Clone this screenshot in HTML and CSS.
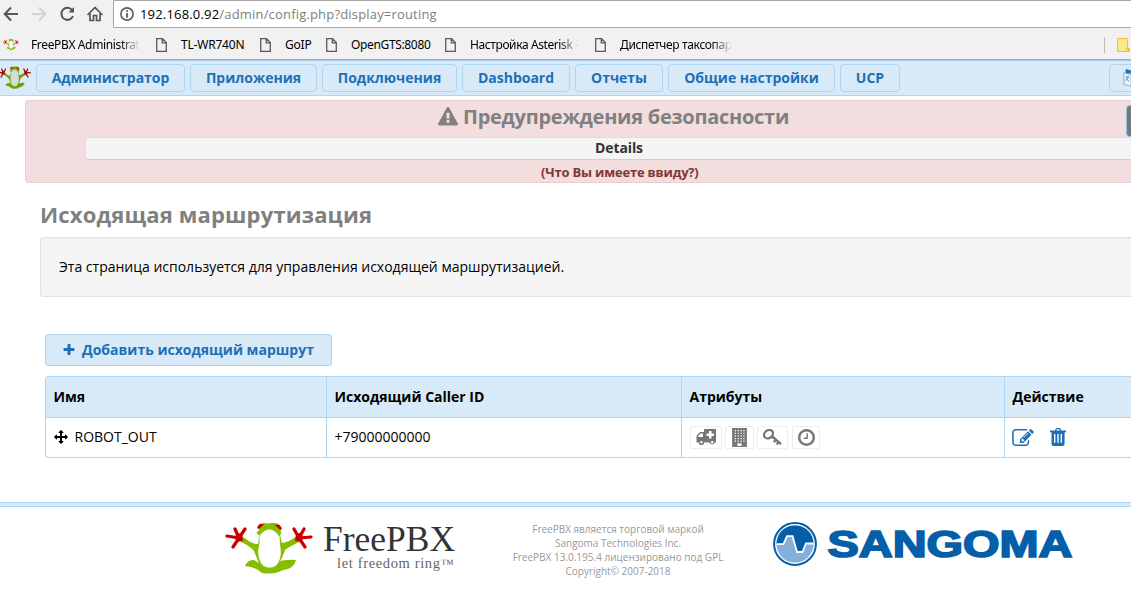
FILE: index.html
```
<!DOCTYPE html>
<html lang="ru">
<head>
<meta charset="utf-8">
<title>Исходящая маршрутизация</title>
<link rel="stylesheet" href="styles.css">
</head>
<body>
<svg class="defs" aria-hidden="true">
  <symbol id="page" viewBox="0 0 11 14"><path d="M.7.7h5.8l3.8 3.900v8.700H.7zM6.300.7v4.100h4" fill="none" stroke="#5a5a5a" stroke-width="1.300"/></symbol>
  <symbol id="frog" viewBox="0 0 88 52" preserveAspectRatio="none">
    <path d="M17 14Q28 23 33 22Q36 13 34 6Q35 1 40 1Q43 2 45 1Q49 1 50 1Q56 2 56 7Q54 13 57 21Q64 20 72 14L74 20Q62 26 60 28Q57 37 54 41H34Q31 34 29 29Q25 24 16 20Z" fill="#85bd00"/>
    <path d="M20 44Q23 37 29 38Q40 46 52 40Q61 37 71 38Q69 47 58 48Q49 53 37 51Q31 45 20 44Z" fill="#85bd00"/>
    <path d="M34 15Q36 9 44 5Q52 9 55 15Q55 22 56 27Q57 38 51 44Q45 48 38 44Q32 37 33 27Q35 20 34 15Z" fill="#fff" stroke="#85bd00" stroke-width=".6"/>
    <path d="M32.500 12Q39 6 44.500 5.500Q50 6 55.500 12" fill="none" stroke="#85bd00" stroke-width="3.400"/>
    <path d="M32 6Q34 0 39 2.500L34 7ZM57 7Q55 1 50 3L55 8Z" fill="#c00"/>
    <path d="M14 16L2 14M14 16L10 7M14 16L20 7M14 16L8 25M74 16L86 15M74 16L79 7M74 16L69 7M74 16L80 25" stroke="#c00" stroke-width="3.200" stroke-linecap="round"/>
    <path d="M10 14L13 11L17 12L18 19L11 20ZM78 14L75 11L71 12L70 19L77 20Z" fill="#c00"/>
  </symbol>
</svg>
<div class="chrome">
  <div class="toolbar">
    <svg class="controls" viewBox="0 0 113 28">
      <g fill="none" stroke="#555" stroke-width="2">
        <path d="M18 14H6M11 7.500L4.700 14L11 20.500"/>
        <path d="M32 14H44M39 7.500L45.300 14L39 20.500" stroke="#d3d3d3"/>
        <path d="M72 10A6 6 0 1 0 73 16"/>
        <path d="M74 7V12.500H68.500Z" fill="#555" stroke="none"/>
        <path d="M87.500 15L95 7.500L102.500 15M90 13.500V20.500H93.500V15.500H96.500V20.500H100V13.500" stroke-width="1.700"/>
      </g>
    </svg>
    <div class="address">
      <svg class="info" viewBox="0 0 14 14"><circle cx="7" cy="7" r="6.100" fill="none" stroke="#5a5a5a" stroke-width="1.600"/><path d="M6.100 3.300h1.800v1.700H6.100zM6.100 6h1.800v4.700H6.100z" fill="#5a5a5a"/></svg>
      <span class="url"><b>192.168.0.92</b>/admin/config.php?display=routing</span>
    </div>
  </div>
  <div class="bookmarks">
    <a class="bm bm1"><svg class="bmfrog"><use href="#frog"/></svg><span class="fade">FreePBX Administrat</span></a>
    <a class="bm bm2"><svg class="page"><use href="#page"/></svg><span>TL-WR740N</span></a>
    <a class="bm bm3"><svg class="page"><use href="#page"/></svg><span>GoIP</span></a>
    <a class="bm bm4"><svg class="page"><use href="#page"/></svg><span>OpenGTS:8080</span></a>
    <a class="bm bm5"><svg class="page"><use href="#page"/></svg><span class="fade">Настройка Asterisk -</span></a>
    <a class="bm bm6"><svg class="page"><use href="#page"/></svg><span class="fade">Диспетчер таксопар</span></a>
    <div class="other"><svg viewBox="0 0 14 16"><path d="M.5 1.500h10v10h2v3H.5z" fill="#ffe78f" stroke="#edc044"/><path d="M9.500 14v-3h2v3" fill="none" stroke="#edc044"/></svg></div>
  </div>
</div>
<nav class="nav">
  <svg class="navfrog"><use href="#frog"/></svg>
  <a class="n1"><span>Администратор</span></a><a class="n2"><span>Приложения</span></a><a class="n3"><span>Подключения</span></a><a class="n4"><span>Dashboard</span></a><a class="n5"><span>Отчеты</span></a><a class="n6"><span>Общие настройки</span></a><a class="n7"><span>UCP</span></a>
  <a class="lang"><svg viewBox="0 0 22 22"><path d="M4 1L22 6H4z" fill="#1d70b5"/><path d="M2 5L10 8V20L2 18ZM10 8H21V20H10" fill="#eef5fb" stroke="#8aa9c4"/><path d="M4 9L8 11M7 9L4 14M4 11L8 15" stroke="#4f86b5" fill="none"/></svg></a>
</nav>
<section class="alert">
  <h2><svg viewBox="0 0 1792 1792"><path d="M1024 1375v-190q0-14-9.500-23.500t-22.500-9.500h-192q-13 0-22.500 9.500t-9.500 23.500v190q0 14 9.500 23.500t22.500 9.500h192q13 0 22.500-9.500t9.500-23.500zm-2-374l18-459q0-12-10-19-13-11-24-11h-220q-11 0-24 11-10 7-10 21l17 457q0 10 10 16.500t24 6.500h185q14 0 23.500-6.500t10.500-16.500zm-14-934l768 1408q35 63-2 126-17 29-46.500 46t-63.500 17h-1536q-34 0-63.500-17t-46.500-46q-37-63-2-126l768-1408q17-31 47-49t65-18 65 18 47 49z"/></svg><span>Предупреждения безопасности</span></h2>
  <div class="details"><span>Details</span></div>
  <div class="what"><span>(Что Вы имеете ввиду?)</span></div>
  <div class="close"></div>
</section>
<main class="main">
  <h1><span>Исходящая маршрутизация</span></h1>
  <div class="well"><span>Эта страница используется для управления исходящей маршрутизацией.</span></div>
  <a class="add"><svg viewBox="0 0 1792 1792"><path d="M1600 736v192q0 40-28 68t-68 28h-416v416q0 40-28 68t-68 28h-192q-40 0-68-28t-28-68v-416h-416q-40 0-68-28t-28-68v-192q0-40 28-68t68-28h416v-416q0-40 28-68t68-28h192q40 0 68 28t28 68v416h416q40 0 68 28t28 68z"/></svg><span>Добавить исходящий маршрут</span></a>
  <div class="table">
    <div class="row head"><div><span>Имя</span></div><div><span>Исходящий Caller ID</span></div><div><span>Атрибуты</span></div><div><span>Действие</span></div></div>
    <div class="row item">
      <div><svg class="move" viewBox="0 0 1792 1792"><path d="M1792 896q0 26-19 45l-256 256q-19 19-45 19t-45-19-19-45v-128h-384v384h128q26 0 45 19t19 45-19 45l-256 256q-19 19-45 19t-45-19l-256-256q-19-19-19-45t19-45 45-19h128v-384h-384v128q0 26-19 45t-45 19-45-19l-256-256q-19-19-19-45t19-45l256-256q19-19 45-19t45 19 19 45v128h384v-384h-128q-26 0-45-19t-19-45 19-45l256-256q19-19 45-19t45 19l256 256q19 19 19 45t-19 45-45 19h-128v384h384v-128q0-26 19-45t45-19 45 19l256 256q19 19 19 45z"/></svg><span>ROBOT_OUT</span></div>
      <div><span>+79000000000</span></div>
      <div class="attrs">
        <i class="a1"><svg viewBox="0 0 20 17"><path fill-rule="evenodd" d="M8 0H20V13.500H18.700A2.600 2.600 0 0 1 13.600 13.500H8A2.600 2.600 0 0 1 2.800 13.500H.5V7L4 3H8ZM13 2V4.500H10.500V7H13V9.500H15.500V7H18V4.500H15.500V2ZM4.500 4.500L2 7.500V8H7V4.500ZM5.400 12A1.200 1.200 0 1 0 5.400 14.500A1.200 1.200 0 1 0 5.400 12ZM16.100 12A1.200 1.200 0 1 0 16.100 14.500A1.200 1.200 0 1 0 16.100 12Z"/></svg></i>
        <i class="a2"><svg viewBox="0 0 14 18"><path d="M0 0H14V18H0Z"/><path d="M2.500 2.500H12M2.500 5H12M2.500 7.500H12M2.500 10H12M2.500 12.500H12" stroke="#fff" stroke-width="1.100" stroke-dasharray="1.200 1.500"/><path d="M5 14.500H9V17H5Z" fill="#fff"/></svg></i>
        <i class="a3"><svg viewBox="0 0 19 17"><ellipse cx="5.500" cy="5.200" rx="4.800" ry="3.900" transform="rotate(-38 5.500 5.200)" fill="none" stroke="#777" stroke-width="2.300"/><path d="M7.600 8.600L9.800 6.300L18.800 14.200L17.300 16L15.800 14.700L14.600 16.200L12.800 14.600L14 13L13.200 12.300L11.600 14L9.800 12.300L11.300 10.700Z"/></svg></i>
        <i class="a4"><svg viewBox="128 128 1536 1536"><path d="M1024 544v448q0 14-9 23t-23 9h-320q-14 0-23-9t-9-23v-64q0-14 9-23t23-9h224v-352q0-14 9-23t23-9h64q14 0 23 9t9 23zm416 352q0-148-73-273t-198-198-273-73-273 73-198 198-73 273 73 273 198 198 273 73 273-73 198-198 73-273zm224 0q0 209-103 385.500t-279.500 279.500-385.500 103-385.500-103-279.500-279.500-103-385.500 103-385.500 279.500-279.500 385.500-103 385.500 103 279.500 279.500 103 385.500z"/></svg></i>
      </div>
      <div class="actions">
        <svg class="edit" viewBox="0 128 1792 1408"><path d="M888 1184l116-116-152-152-116 116v56h96v96h56zm440-720q-16-16-33 1l-350 350q-17 17-1 33t33-1l350-350q17-17 1-33zm80 594v190q0 119-84.500 203.500t-203.500 84.500h-832q-119 0-203.500-84.500t-84.500-203.500v-832q0-119 84.500-203.500t203.500-84.500h832q63 0 117 25 15 7 18 23 3 17-9 29l-49 49q-14 14-32 8-23-6-45-6h-832q-66 0-113 47t-47 113v832q0 66 47 113t113 47h832q66 0 113-47t47-113v-126q0-13 9-22l64-64q15-15 35-7t20 29zm-96-738l288 288-672 672h-288v-288zm444 132l-92 92-288-288 92-92q28-28 68-28t68 28l152 152q28 28 28 68t-28 68z"/></svg>
        <svg class="trash" viewBox="0 0 16 18"><path fill-rule="evenodd" d="M5 2.500L5.700.8Q6 0 7 0H9.500Q10.400 0 10.700.8L11.300 2.500H16V4.200H14.600V15.500Q14.600 18 12.500 18H3.500Q1.500 18 1.500 15.500V4.200H0V2.500ZM6.300 2.500H10L9.600 1.300H6.700ZM4 6V14.700H5.400V6ZM7.300 6V14.700H8.700V6ZM10.600 6V14.700H12V6Z"/></svg>
      </div>
    </div>
  </div>
</main>
<footer class="footer">
  <svg class="fpbx" viewBox="0 0 234 60" aria-label="FreePBX let freedom ring">
    <use href="#frog" x="0" y="2" width="88" height="52"/>
    <text x="98" y="31" font-size="36" fill="#333" textLength="132" lengthAdjust="spacingAndGlyphs">FreePBX</text>
    <text x="112" y="48" font-size="14.500" fill="#666" textLength="103" lengthAdjust="spacing">let freedom ring</text>
    <text x="216" y="48" font-size="13" fill="#666" textLength="13" lengthAdjust="spacingAndGlyphs">™</text>
  </svg>
  <div class="copy"><span class="c1">FreePBX является торговой маркой</span><span class="c2">Sangoma Technologies Inc.</span><span class="c3">FreePBX 13.0.195.4 лицензировано под GPL</span><span class="c4">Copyright© 2007-2018</span></div>
  <svg class="sangoma" viewBox="0 0 302 46" aria-label="Sangoma">
    <circle cx="22" cy="23" r="20.900" fill="#fff" stroke="#055ea8" stroke-width="2"/>
    <circle cx="22" cy="23" r="18.600" fill="#86aedb"/>
    <path d="M3.400 23A18.600 18.600 0 0 1 40.600 23H34L30 31H24L20 15H14L11 23Z" fill="#055ea8"/>
    <path d="M3.400 23.200H10.500L14 15.200H19.500L24 31H29.500L33 22.500H40.600" fill="none" stroke="#fff" stroke-width="1.800"/>
    <text x="54.500" y="36" font-size="37" textLength="245" lengthAdjust="spacingAndGlyphs">SANGOMA</text>
  </svg>
</footer>
</body>
</html>
```
FILE: styles.css
```
* { box-sizing: border-box; }
body { margin: 0; width: 1131px; height: 601px; overflow: hidden; background: #fff; color: #000; font: 14px/20px "Open Sans", "Noto Sans", sans-serif; }
svg { display: block; flex: none; }
.defs { position: absolute; width: 0; height: 0; }
span { white-space: nowrap; }
.chrome { height: 60px; background: #f1f1f1; border-bottom: 1px solid #a9a9a9; }
.toolbar { display: flex; height: 28px; }
.controls { width: 113px; height: 28px; }
.address { flex: 1; display: flex; align-items: center; padding-left: 6px; gap: 6px; background: #fff; border: 1px solid #a6a6a6; border-right: 0; border-radius: 2px 0 0 2px; }
.info { width: 14px; height: 14px; }
.url { font-size: 13px; color: #808080; letter-spacing: .18px; }
.url b { font-weight: 400; color: #000; }
.bookmarks { display: flex; height: 31px; padding: 2px 0 0 3px; font-family: "Noto Sans", sans-serif; font-size: 12px; letter-spacing: -.2px; }
.bm { display: flex; align-items: center; flex: none; }
.bm1 { width: 153px; gap: 12px; letter-spacing: -.36px; }
.bm2 { width: 104px; gap: 14px; }
.bm3 { width: 66px; gap: 14px; }
.bm4 { width: 119px; gap: 14px; letter-spacing: -.35px; }
.bm5 { width: 150px; gap: 14px; }
.bm6 { width: 160px; gap: 14px; }
.page { width: 11px; height: 14px; }
.bmfrog { width: 16px; height: 11px; }
.fade { min-width: 108px; -webkit-mask-image: linear-gradient(90deg, #000 82%, transparent); mask-image: linear-gradient(90deg, #000 82%, transparent); }
.bm5 { letter-spacing: -.4px; }
.bm6 { letter-spacing: -.35px; }
.other { margin: 7px 0 0 auto; height: 16px; width: 27px; padding-left: 12px; border-left: 1px solid #bbb; }
.other svg { width: 14px; height: 16px; }
.nav { position: relative; display: flex; align-items: flex-start; gap: 5px; height: 36px; padding-top: 3px; background: #d8eaf8; border-top: 1px solid #abcbe8; border-bottom: 1px solid #aed5f1; overflow: hidden; }
.navfrog { width: 33px; height: 23px; margin: 2px 0 0 -2px; filter: brightness(.85); }
.nav a { display: flex; align-items: center; justify-content: center; flex: none; height: 28px; border: 1px solid #aed5f1; border-radius: 4px; color: #1d70b5; font-weight: 700; }
.n1 { width: 149px; } .n2 { width: 127px; } .n3 { width: 135px; } .n4 { width: 108px; } .n5 { width: 88px; } .n6 { width: 167px; } .n7 { width: 60px; }
.nav .lang { width: 48px; margin-left: 204px; justify-content: flex-start; padding-left: 12px; }
.lang svg { width: 20px; height: 20px; }
.alert { position: relative; height: 83px; margin: 4px 0 0 25px; border: 1px solid #ebccd1; border-right: 0; border-radius: 4px 0 0 4px; background: #f2dede; }
.alert h2 { display: flex; align-items: center; gap: 5px; height: 36px; margin: 0; padding: 0 0 4px 412px; font-size: 20px; letter-spacing: -.27px; color: #808080; }
.alert h2 svg { width: 20px; height: 20px; fill: #808080; }
.details { height: 22px; margin-left: 60px; padding-left: 509px; background: #f5f5f5; border-top: 1px solid #ddd; border-radius: 3px 0 0 3px; box-shadow: 0 1px 1px #d5cdcd; color: #333; font-weight: 700; letter-spacing: -.1px; }
.what { padding: 3px 0 0 515px; color: #843534; font-size: 13px; font-weight: 700; letter-spacing: -.2px; }
.close { position: absolute; right: 0; top: 4px; width: 5px; height: 32px; background: #777; border: 1px solid #8fc6e8; border-right: 0; border-radius: 4px 0 0 4px; }
.main { padding: 16px 0 0 40px; }
.main h1 { height: 38px; margin: 0; font-size: 22px; line-height: 30px; letter-spacing: .17px; color: #808080; }
.well { height: 60px; padding: 19px 18px; background: #f5f5f5; border: 1px solid #e3e3e3; border-right: 0; border-radius: 4px 0 0 4px; box-shadow: inset 0 1px 1px #ececec; }
.add { display: flex; align-items: center; gap: 6px; width: 287px; height: 32px; margin: 37px 0 10px 5px; padding-left: 16px; background: #d8eaf8; border: 1px solid #aed5f1; border-radius: 3px; color: #1d70b5; fill: #1d70b5; font-weight: 700; }
.add svg { width: 14px; height: 14px; }
.table { margin-left: 5px; border: 1px solid #aed5f1; border-right: 0; border-radius: 4px 0 0 4px; height: 82px; overflow: hidden; }
.row { display: grid; grid-template-columns: 281px 355px 323px 1fr; height: 40px; }
.row.head { height: 41px; background: #d8eaf8; border-bottom: 1px solid #aed5f1; font-weight: 700; }
.row > div { display: flex; align-items: center; padding-left: 7.5px; }
.row.item > div { padding-bottom: 2px; }
.row > div:not(:last-child) { border-right: 1px solid #aed5f1; }
.move { width: 14px; height: 14px; margin-right: 7px; }
.row .attrs { fill: #777; gap: 3px; padding-left: 8px; }
.attrs i { display: flex; align-items: center; justify-content: center; height: 23px; border: 1px solid #eee; border-radius: 2px; }
.a1 { width: 32px; } .a2 { width: 29px; } .a3 { width: 31px; } .a4 { width: 28px; }
.attrs i.a4 { margin-left: 1px; }
.a1 svg { width: 20px; height: 17px; } .a2 svg { width: 15px; height: 19px; } .a3 svg { width: 19px; height: 17px; } .a4 svg { width: 17px; height: 17px; }
.row .actions { fill: #1d70b5; gap: 16px; padding-left: 7px; }
.edit { width: 22px; height: 17px; }
.trash { width: 16px; height: 18px; }
.footer { position: relative; display: flex; height: 99px; margin-top: 44px; padding-top: 13px; border-top: 1px solid #aed5f1; background: linear-gradient(#d8eaf8 0 3px, #aed5f1 3px 4px, #fff 4px); }
.fpbx { width: 234px; height: 60px; margin: 4px 0 0 225px; font-family: "Liberation Serif", serif; }
.copy { display: flex; flex-direction: column; align-items: center; width: 212px; margin: 6px 0 0 53px; font-size: 10px; line-height: 14px; color: #999; }
.sangoma { width: 302px; height: 46px; margin: 5px 0 0 49px; fill: #055ea8; font: bold 38px "Liberation Sans", Arial, sans-serif; }
.sangoma text { stroke: #055ea8; stroke-width: 1.7px; }
```
